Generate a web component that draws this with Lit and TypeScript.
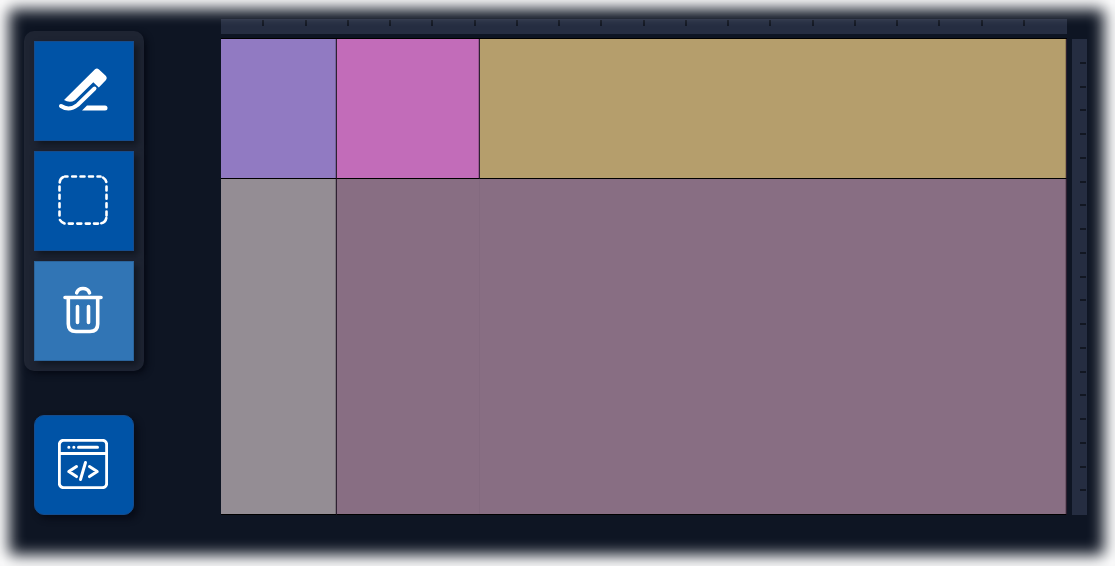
import { LitElement, html, css, svg } from "lit";
import { customElement } from "lit/decorators.js";

const steps = Array.from({ length: 20 });

const penIcon = svg`<svg viewBox="0 0 50 50" fill="none" aria-hidden="true">
  <path fill="#fff" d="M6 35 37 4.200Q39 2.500 41 4.400L48 11Q49.600 13 48 15L40.800 22.500 35.300 17.200 17 35.300Q11.500 38.500 6 35Z"/>
  <path stroke="#fff" stroke-width="4" stroke-linecap="round" stroke-linejoin="round" d="M3 41Q11 46.500 19.500 40L36.500 23.500"/>
  <path fill="#fff" d="M29 40.500H47A2.500 2.500 0 0 1 47 45.500H24Z"/>
</svg>`;

const selectIcon = svg`<svg viewBox="0 0 50 50" fill="none" stroke="#fff" stroke-width="2.600" stroke-linecap="round" aria-hidden="true">
  <path d="M7 1.500H9.500M14.200 1.500H18M22.500 1.500H26.500M31 1.500H35M39.500 1.500H42.500M45 2.500Q48 4.500 48.300 7M48.500 11.500V15.500M48.500 19.800V23.800M48.500 28.200V32.200M48.500 36.500V40.500M48.300 43Q47.500 47.500 43.300 48.300M40 48.600H36M31.800 48.600H27.800M23.300 48.600H19.300M14.800 48.600H10.800M6.500 48.500Q3 47 2 45M1.500 40.500V36.500M1.500 32.200V28.200M1.500 23.800V19.800M1.500 15.500V11.500M1.700 7.500Q2 3.500 5 2.200"/>
</svg>`;

const trashIcon = svg`<svg viewBox="0 0 50 50" fill="none" stroke="#fff" stroke-width="3.600" stroke-linecap="round" aria-hidden="true">
  <path d="M7 12.500H43M10.300 13V39Q10.300 46.500 18 46.500H32Q39.700 46.500 39.700 39V13M19.500 21.500V37.500M30.500 21.500V37.500M18.700 7.800Q20 3.500 25 3.500T31.500 7.800"/>
</svg>`;

const codeIcon = svg`<svg viewBox="0 0 50 50" fill="none" stroke="#fff" stroke-width="3" stroke-linecap="round" stroke-linejoin="round" aria-hidden="true">
  <rect x="1.300" y="1.300" width="47.400" height="47.400" rx="4.500"/>
  <path d="M2 14.500H48M20.500 8.300H39.500M10.800 8.300H10.900M15.800 8.300H15.900"/>
  <path d="M18.500 27.500 10.800 32.600 18.500 37.600M31.500 27.500 39.200 32.600 31.500 37.600M27.500 23.500 22.500 40.500"/>
</svg>`;

@customElement("app-root")
export class AppRoot extends LitElement {
  static styles = css`
    * {
      box-sizing: border-box;
    }
    :host {
      display: block;
      font-family: "Noto Sans", sans-serif;
    }
    .page {
      position: relative;
      display: flex;
      gap: 77px;
      min-height: 100vh;
      padding: 19px 28px 51px 24px;
      background: #0e1523;
    }
    .page::after {
      content: "";
      position: absolute;
      inset: 0;
      pointer-events: none;
      box-shadow: inset -1px -1px 15px 10px #fff;
    }
    .sidebar {
      display: flex;
      flex-direction: column;
      justify-content: space-between;
      padding-top: 12px;
    }
    .tools {
      display: flex;
      flex-direction: column;
      gap: 10px;
      padding: 10px;
      border-radius: 10px;
      background: #1e2432;
      box-shadow: 3px 3px 6px #070b16;
    }
    .tool {
      display: grid;
      place-items: center;
      width: 100px;
      height: 100px;
      padding: 0 2px 2px 0;
      border: 1px solid #154c8d;
      background: #0053a6;
      box-shadow: 4px 4px 6px #111722;
      cursor: pointer;
    }
    .tool svg {
      display: block;
      width: 50px;
      height: 50px;
    }
    .muted {
      border-color: #2b649b;
      background: #3175b5;
    }
    .code {
      margin-left: 10px;
      border-radius: 10px;
      box-shadow: 4px 4px 6px #080c17;
    }
    .workspace {
      flex: 1;
      display: grid;
      grid-template-columns: 1fr 15px;
      grid-template-rows: 15px 1fr;
      gap: 5px;
    }
    .ruler {
      display: flex;
      background: #252d41;
    }
    .step {
      flex: 1;
    }
    .across .step {
      height: 7px;
    }
    .across .step:not(:last-child) {
      background: linear-gradient(#121722, #121722) right bottom / 2px 6px no-repeat;
    }
    .across {
      padding-left: 1px;
    }
    .down {
      grid-area: 2 / 2;
      flex-direction: column;
      padding: 1px 1px 0 0;
    }
    .down .step:not(:last-child) {
      background: linear-gradient(#121722, #121722) right bottom / 6px 2px no-repeat;
    }
    .canvas {
      grid-area: 2 / 1;
      display: grid;
      grid-template-columns: 116fr 143fr 587fr;
      grid-template-rows: 140fr 336fr;
      box-shadow: 0 -1px #000;
    }
    .area {
      border-right: 1px solid #2f2032;
      border-bottom: 1px solid #000;
      box-shadow: inset -1px 0 #00000030;
    }
    .violet {
      background: #917ac2;
    }
    .pink {
      background: #c26cb9;
    }
    .gold {
      background: #b59e6c;
    }
    .gray {
      background: #948d94;
    }
    .mauve {
      grid-column: 2 / 4;
      display: grid;
      grid-template-columns: 143fr 587fr;
      background: #886e83;
    }
    .seam {
      border-right: 1px solid #836a7f;
    }
  `;

  render() {
    return html`
      <main class="page">
        <nav class="sidebar" aria-label="Editor">
          <div class="tools">
            <button class="tool" aria-label="Draw">${penIcon}</button>
            <button class="tool" aria-label="Select">${selectIcon}</button>
            <button class="tool muted" aria-label="Delete">${trashIcon}</button>
          </div>
          <button class="tool code" aria-label="Show code">${codeIcon}</button>
        </nav>
        <section class="workspace" aria-label="Grid layout">
          <div class="ruler across">${steps.map(() => html`<span class="step"></span>`)}</div>
          <div class="canvas">
            <div class="area violet"></div>
            <div class="area pink"></div>
            <div class="area gold"></div>
            <div class="area gray"></div>
            <div class="area mauve"><div class="seam"></div></div>
          </div>
          <div class="ruler down">${steps.map(() => html`<span class="step"></span>`)}</div>
        </section>
      </main>
    `;
  }
}
